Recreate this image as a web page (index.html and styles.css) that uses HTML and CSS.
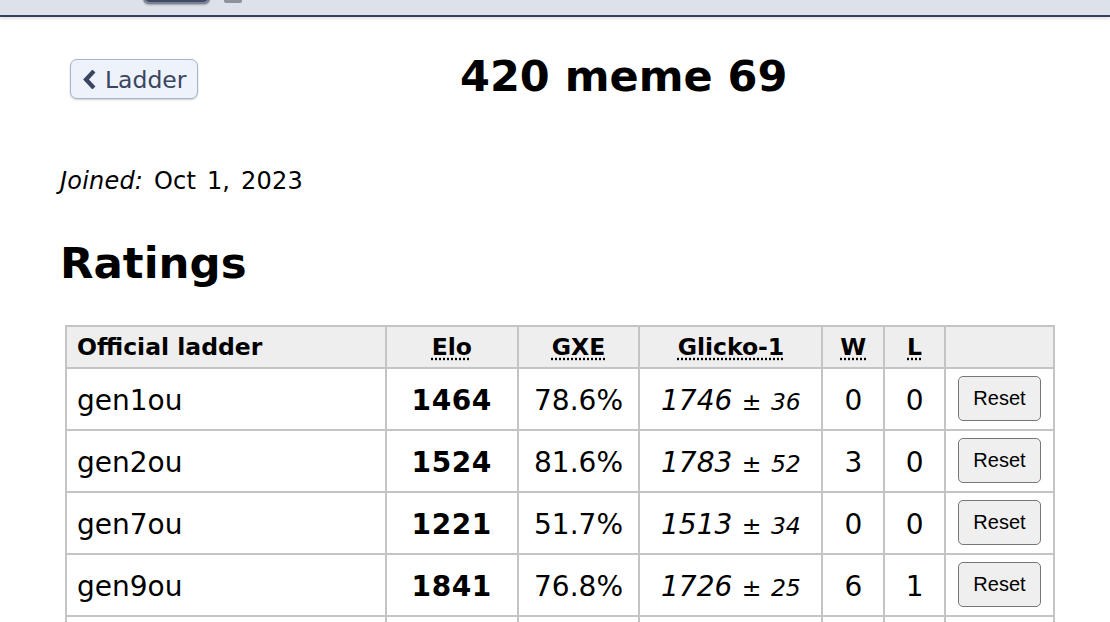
FILE: index.html
```html
<!DOCTYPE html>
<html>
<head>
<meta charset="utf-8">
<link rel="stylesheet" href="styles.css">
</head>
<body>
<div class="topbar"><div class="tab"></div><div class="tab2"></div></div>
<div class="page">
  <div class="head">
    <a class="back" href="#"><svg class="chev" viewBox="0 0 14 19" width="14" height="19"><path d="M10.5 2.5 L4 9.5 L10.5 16.5" fill="none" stroke="#3a4560" stroke-width="4.2" stroke-linecap="square" stroke-linejoin="miter"/></svg><span>Ladder</span></a>
    <h1 class="title">420 meme 69</h1>
  </div>
  <p class="joined"><em>Joined:</em> Oct 1, 2023</p>
  <h2 class="section">Ratings</h2>
  <table class="ratings">
    <tr>
      <th class="name">Official ladder</th>
      <th><abbr>Elo</abbr></th>
      <th><abbr>GXE</abbr></th>
      <th><abbr>Glicko-1</abbr></th>
      <th><abbr>W</abbr></th>
      <th><abbr>L</abbr></th>
      <th class="act"></th>
    </tr>
    <tr>
      <td class="name">gen1ou</td><td class="elo">1464</td><td>78.6%</td>
      <td class="gl"><em class="g">1746</em><small> ± <em>36</em></small></td>
      <td>0</td><td>0</td><td class="act"><button class="reset">Reset</button></td>
    </tr>
    <tr>
      <td class="name">gen2ou</td><td class="elo">1524</td><td>81.6%</td>
      <td class="gl"><em class="g">1783</em><small> ± <em>52</em></small></td>
      <td>3</td><td>0</td><td class="act"><button class="reset">Reset</button></td>
    </tr>
    <tr>
      <td class="name">gen7ou</td><td class="elo">1221</td><td>51.7%</td>
      <td class="gl"><em class="g">1513</em><small> ± <em>34</em></small></td>
      <td>0</td><td>0</td><td class="act"><button class="reset">Reset</button></td>
    </tr>
    <tr>
      <td class="name">gen9ou</td><td class="elo">1841</td><td>76.8%</td>
      <td class="gl"><em class="g">1726</em><small> ± <em>25</em></small></td>
      <td>6</td><td>1</td><td class="act"><button class="reset">Reset</button></td>
    </tr>
    <tr>
      <td class="name"></td><td class="elo"></td><td></td>
      <td class="gl"></td>
      <td></td><td></td><td class="act"></td>
    </tr>
  </table>
</div>
</body>
</html>
```
FILE: styles.css
```css
html, body {
  margin: 0;
  padding: 0;
  background: #fff;
}
body {
  font-family: "DejaVu Sans", Verdana, sans-serif;
  color: #000;
  overflow: hidden;
}
.topbar {
  height: 15px;
  background: #dce1ea;
  border-bottom: 2px solid #34405f;
  box-shadow: 0 2px 3px rgba(0,0,0,0.12);
  display: flex;
  align-items: flex-start;
}
.tab {
  margin-left: 143px;
  width: 63px;
  height: 6px;
  margin-top: -4px;
  background: #dce1ea;
  border: 2px solid #7a8294;
  border-top: none;
  border-radius: 0 0 6px 6px;
  box-shadow: inset 0 -2px 0 #3e4a68, 0 1px 2px rgba(0,0,0,0.3);
}
.tab2 {
  margin-left: 14px;
  width: 18px;
  height: 3px;
  background: #8d929c;
  border-radius: 0 0 2px 2px;
}
.page {
  padding: 0 0 0 60px;
}
.head {
  display: flex;
  align-items: flex-start;
  width: 987px;
  margin-top: 42px;
}
.back {
  margin-left: 10px;
  display: flex;
  align-items: center;
  gap: 9px;
  height: 38px;
  padding: 0 11px 0 11px;
  border: 1px solid #a5b5cd;
  border-radius: 7px;
  background: #eef3fb;
  box-shadow: 0 1px 2px rgba(0,0,0,0.2);
  color: #3a4560;
  text-decoration: none;
  font-size: 23.5px;
}
.back span {
  line-height: 1;
  padding-top: 3px;
}
.title {
  flex: 1;
  margin: -4px 0 0 0;
  text-align: center;
  font-size: 43px;
  font-weight: bold;
  line-height: 1;
  padding-left: 2px;
}
.joined {
  margin: 70px 0 0 0;
  font-size: 24px;
  line-height: 1;
  word-spacing: 3px;
  letter-spacing: 0.2px;
}
.joined em {
  font-style: italic;
}
.section {
  margin: 49px 0 0 0;
  font-size: 43.5px;
  font-weight: bold;
  line-height: 1;
}
.ratings {
  margin: 39px 0 0 5px;
  border-collapse: collapse;
  border: 2px solid #c4c4c4;
  width: 990px;
}
.ratings th, .ratings td {
  border: 2px solid #c4c4c4;
  text-align: center;
  padding: 0 12px;
}
.ratings th {
  background: #eeeeee;
  font-size: 23.5px;
  font-weight: bold;
  height: 40px;
}
.ratings th abbr {
  text-decoration: underline dotted;
  text-underline-offset: 4px;
}
.ratings td {
  height: 57px;
  padding-top: 3px;
  font-size: 28px;
}
.ratings th:nth-child(1) { width: 299px; }
.ratings th:nth-child(2) { width: 106px; }
.ratings th:nth-child(3) { width: 96px; }
.ratings th:nth-child(4) { width: 158px; }
.ratings th:nth-child(5) { width: 36px; }
.ratings th:nth-child(6) { width: 35px; }
.ratings th:nth-child(7) { width: 78px; }
.ratings .name {
  text-align: left;
  padding-left: 10px;
}
.ratings .elo {
  font-weight: bold;
  letter-spacing: 0.6px;
}
.ratings .gl {
  word-spacing: 2px;
}
.ratings .g {
  font-style: italic;
}
.ratings small {
  font-size: 23.5px;
}
.ratings small em {
  font-style: italic;
}
.ratings td.act {
  padding: 0 12px;
  height: 60px;
}
.reset {
  font-family: "Liberation Sans", Arial, sans-serif;
  font-size: 20px;
  width: 83px;
  height: 45px;
  background: #efefef;
  border: 1.5px solid #767676;
  border-radius: 5px;
  color: #000;
  padding: 0;
}
```
